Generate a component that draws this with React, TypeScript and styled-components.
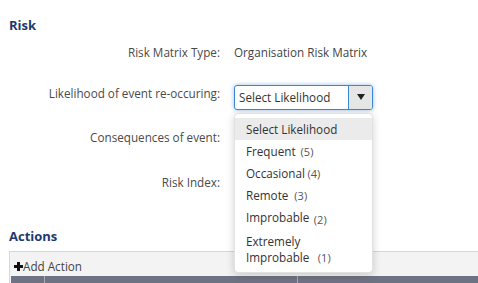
import React from "react";
import styled, { createGlobalStyle } from "styled-components";

const Global = createGlobalStyle`
  html, body { margin: 0; padding: 0; background: #fff; }
  body {
    font-family: "Open Sans", "DejaVu Sans", sans-serif;
    font-size: 11.7px;
    color: #444;
  }
`;

const Page = styled.div`
  width: 478px;
  height: 283px;
  overflow: hidden;
  padding: 16px 0 0 9px;
  box-sizing: border-box;
`;

const Heading = styled.h2<{ $top?: number; $bottom?: number }>`
  margin: ${(p) => p.$top ?? 0}px 0 ${(p) => p.$bottom ?? 0}px;
  font-size: 13px;
  line-height: 18px;
  font-weight: 700;
  color: #1c3a6e;
`;

const Form = styled.div`
  margin-top: 8px;
  display: flex;
  flex-direction: column;
  gap: 17.5px;
`;

const Row = styled.div`
  display: grid;
  grid-template-columns: 211px 1fr;
  column-gap: 14px;
  align-items: start;
  min-height: 23px;
`;

const Label = styled.div`
  text-align: right;
  line-height: 20px;
  color: #4a4a4a;
`;

const Value = styled.div`
  line-height: 20px;
  color: #444;
`;

const SelectWrap = styled.div`
  position: relative;
  width: 139px;
  margin-top: 2.2px;
`;

const SelectBox = styled.div<{ $focused?: boolean }>`
  display: flex;
  height: 25px;
  box-sizing: border-box;
  border: 1px solid ${(p) => (p.$focused ? "#3a87d6" : "#c8c8c8")};
  border-radius: 3px;
  box-shadow: ${(p) => (p.$focused ? "0 0 4px rgba(58,135,214,0.55)" : "none")};
  background: #fff;
  overflow: hidden;
`;

const SelectText = styled.div`
  flex: 1;
  padding-left: 4px;
  line-height: 23px;
  color: #333;
  white-space: nowrap;
`;

const SelectButton = styled.div<{ $focused?: boolean }>`
  width: 23px;
  border-left: 1px solid ${(p) => (p.$focused ? "#3a87d6" : "#c8c8c8")};
  background: #e6e6e6;
  display: flex;
  align-items: center;
  justify-content: center;
`;

const Menu = styled.ul`
  position: absolute;
  top: calc(100% + 3px);
  left: 0;
  width: 139px;
  box-sizing: border-box;
  margin: 0;
  padding: 4px 0 3px;
  list-style: none;
  background: #fff;
  border: 1px solid #e2e2e2;
  border-radius: 4px;
  box-shadow: 0 2px 8px rgba(0, 0, 0, 0.18);
  z-index: 5;
`;

const Item = styled.li<{ $active?: boolean; $multi?: boolean }>`
  padding: ${(p) => (p.$multi ? "5px 11px 4px" : "3px 11px")};
  line-height: 16px;
  color: #333;
  background: ${(p) => (p.$active ? "#ebebeb" : "transparent")};
`;

const Count = styled.span<{ $gap: number; $drop?: number }>`
  display: inline-block;
  margin-left: ${(p) => p.$gap}px;
  font-size: 11px;
  line-height: 10px;
  vertical-align: baseline;
  color: #555;
  position: relative;
  top: ${(p) => p.$drop ?? 0}px;
`;

const Panel = styled.div`
  margin-right: -20px;
  border-top: 1px solid #d6d6d6;
  border-left: 1px solid #d6d6d6;
  background: #f3f3f3;
  padding-left: 1px;
`;

const Toolbar = styled.div`
  display: flex;
  align-items: center;
  height: 24px;
  padding: 4px 0 0 3px;
  box-sizing: border-box;
  line-height: 20px;
  color: #444;
`;

const AddIcon = styled.svg`
  width: 9px;
  height: 9px;
`;

const TableHead = styled.div`
  display: grid;
  grid-template-columns: 33px 253px 1fr;
  height: 12px;
  background: #6f7282;
`;

const HeadCell = styled.div`
  border-left: 1px solid #a9abb5;
  &:first-child { border-left: none; }
`;

const ArrowDown = () => (
  <svg width="8" height="6" viewBox="0 0 8 6">
    <path d="M0 0H8L4 6Z" fill="#222" />
  </svg>
);

const options: { label: string; count?: string; gap?: number; drop?: number; multi?: boolean }[] = [
  { label: "Select Likelihood" },
  { label: "Frequent", count: "(5)", gap: 5 },
  { label: "Occasional", count: "(4)", gap: 2.5 },
  { label: "Remote", count: "(3)", gap: 6 },
  { label: "Improbable", count: "(2)", gap: 4.5, drop: 2 },
  { label: "Extremely Improbable", count: "(1)", gap: 8.5, multi: true },
];

export default function App() {
  return (
    <>
      <Global />
      <Page>
        <Heading>Risk</Heading>
        <Form>
          <Row>
            <Label>Risk Matrix Type:</Label>
            <Value>Organisation Risk Matrix</Value>
          </Row>
          <Row>
            <Label>Likelihood of event re-occuring:</Label>
            <SelectWrap>
              <SelectBox $focused>
                <SelectText>Select Likelihood</SelectText>
                <SelectButton $focused>
                  <ArrowDown />
                </SelectButton>
              </SelectBox>
              <Menu>
                {options.map((o, i) => (
                  <Item key={o.label} $active={i === 0} $multi={o.multi}>
                    {o.multi ? (
                      <>
                        Extremely
                        <br />
                        Improbable
                      </>
                    ) : (
                      o.label
                    )}
                    {o.count && (
                      <Count $gap={o.gap ?? 4} $drop={o.drop}>
                        {o.count}
                      </Count>
                    )}
                  </Item>
                ))}
              </Menu>
            </SelectWrap>
          </Row>
          <Row>
            <Label>Consequences of event:</Label>
            <SelectWrap>
              <SelectBox>
                <SelectText />
                <SelectButton>
                  <ArrowDown />
                </SelectButton>
              </SelectBox>
            </SelectWrap>
          </Row>
          <Row>
            <Label>Risk Index:</Label>
            <Value />
          </Row>
        </Form>
        <Heading $top={32.1} $bottom={6.5}>Actions</Heading>
        <Panel>
          <Toolbar>
            <AddIcon viewBox="0 0 9 9">
              <path d="M3 0H6V3H9V6H6V9H3V6H0V3H3Z" fill="#111" />
            </AddIcon>
            Add Action
          </Toolbar>
          <TableHead>
            <HeadCell />
            <HeadCell />
            <HeadCell />
          </TableHead>
        </Panel>
      </Page>
    </>
  );
}
